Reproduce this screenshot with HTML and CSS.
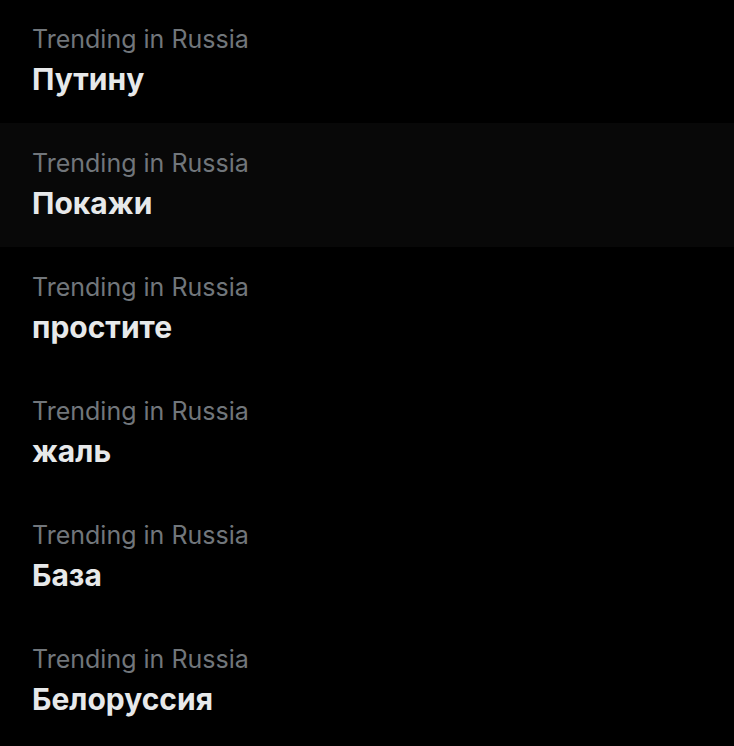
FILE: index.html
```html
<!DOCTYPE html>
<html lang="en">
<head>
  <meta charset="UTF-8" />
  <meta name="viewport" content="width=device-width, initial-scale=1" />
  <title>Trends</title>
  <link rel="stylesheet" href="styles.css">
</head>
<body>
  <div class="trend-list">
    <div class="trend">
      <div class="trend-meta">Trending in Russia</div>
      <div class="trend-name">Путину</div>
    </div>
    <div class="trend active">
      <div class="trend-meta">Trending in Russia</div>
      <div class="trend-name">Покажи</div>
    </div>
    <div class="trend">
      <div class="trend-meta">Trending in Russia</div>
      <div class="trend-name">простите</div>
    </div>
    <div class="trend">
      <div class="trend-meta">Trending in Russia</div>
      <div class="trend-name">жаль</div>
    </div>
    <div class="trend">
      <div class="trend-meta">Trending in Russia</div>
      <div class="trend-name">База</div>
    </div>
    <div class="trend">
      <div class="trend-meta">Trending in Russia</div>
      <div class="trend-name">Белоруссия</div>
    </div>
  </div>
</body>
</html>
```

FILE: styles.css
```css
* {
  box-sizing: border-box;
}
body {
  margin: 0;
  background: #000000;
  font-family: 'Inter', 'Noto Sans', sans-serif;
  overflow: hidden;
}
.trend-list {
  display: flex;
  flex-direction: column;
  margin-top: -1px;
}
.trend {
  height: 124px;
  padding: 24px 32px;
}
.trend.active {
  background: #080808;
}
.trend-meta {
  font-size: 25px;
  line-height: 32px;
  color: #71767b;
}
.trend-name {
  margin-top: 4px;
  font-size: 30px;
  line-height: 40px;
  font-weight: 700;
  color: #e7e9ea;
}
```
